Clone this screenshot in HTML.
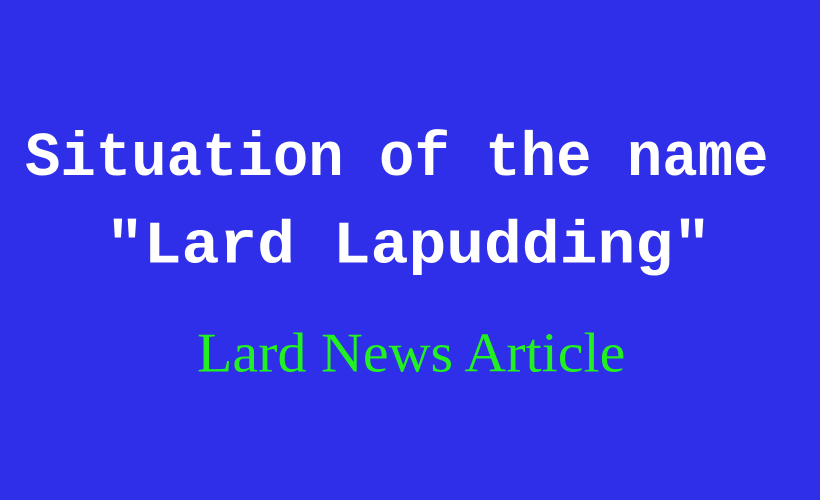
<!DOCTYPE html>
<html><head><style>
html,body{margin:0;padding:0}
body{width:820px;height:500px;background:#2f2ee8;position:relative;overflow:hidden}
.t{position:absolute;white-space:pre;line-height:1;transform-origin:0 100%}
.w{font-family:"Liberation Mono",monospace;font-weight:bold;color:#fff}
</style></head><body>
<div class="t w" style="left:25px;top:131px;font-size:59px;transform:scaleY(1.06)">Situation of the name</div>
<div class="t w" style="left:106px;top:214px;font-size:63px;transform:scaleY(0.95)">"Lard Lapudding"</div>
<div class="t" style="left:197px;top:323px;font-size:58px;font-family:'Liberation Serif',serif;color:#22f022;transform:scaleY(0.96)">Lard News Article</div>
</body></html>
